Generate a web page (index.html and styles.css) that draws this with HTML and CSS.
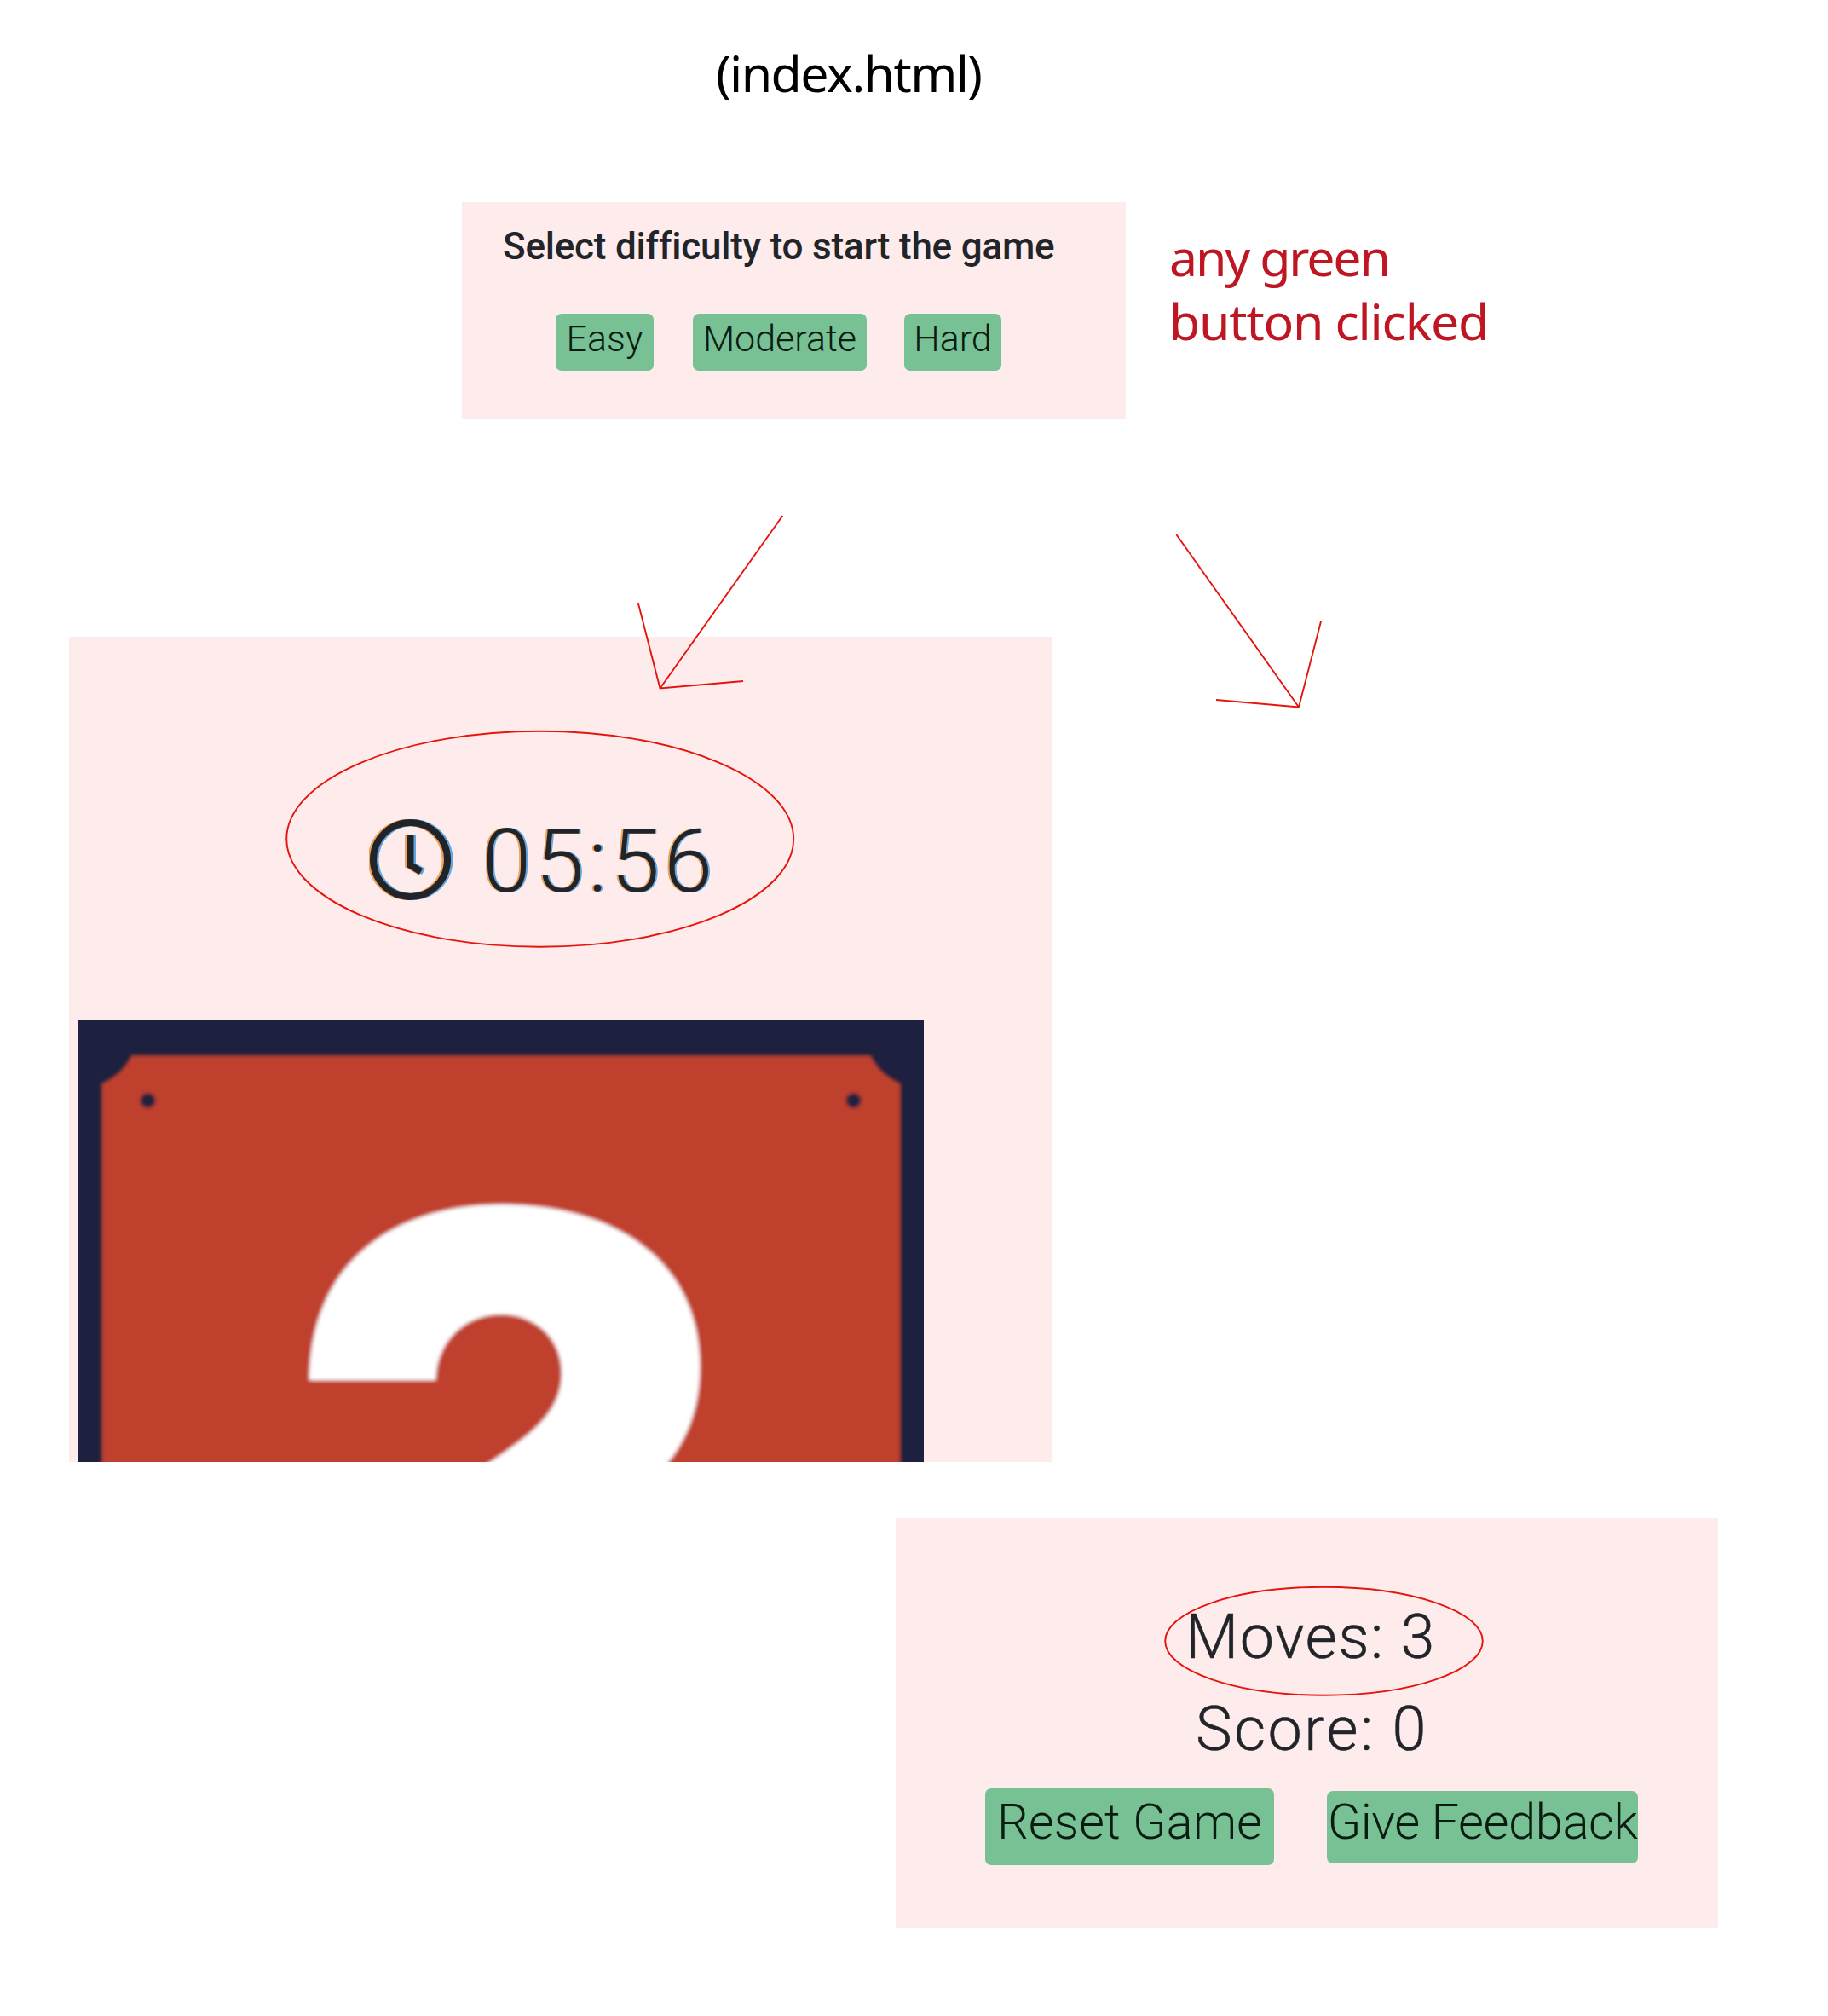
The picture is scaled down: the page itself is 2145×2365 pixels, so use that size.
FILE: index.html
```html
<!DOCTYPE html>
<html lang="en">
<head>
<meta charset="utf-8">
<title>index.html flow</title>
<link rel="stylesheet" href="styles.css">
</head>
<body>
<main class="board">
  <h1 class="board-title">(index.html)</h1>

  <div class="start-row">
    <section class="panel start-panel">
      <h2 class="start-heading">Select difficulty to start the game</h2>
      <div class="difficulty">
        <button class="btn btn-easy">Easy</button>
        <button class="btn btn-moderate">Moderate</button>
        <button class="btn btn-hard">Hard</button>
      </div>
    </section>
    <p class="note"><span class="note-line note-first">any green</span><span class="note-line note-second">button clicked</span></p>
  </div>

  <section class="panel game-panel">
    <div class="timer">
      <svg class="clock" viewBox="0 0 98 98">
        <g fill="none" stroke-width="8">
          <g stroke="#eda45f"><circle cx="46" cy="48.500" r="43.500"/><path d="M46 19V55L59 62.500"/></g>
          <g stroke="#63a5dc"><circle cx="51" cy="48.500" r="43.500"/><path d="M51 19V55L64 62.500"/></g>
          <g stroke="#212529"><circle cx="48.500" cy="48.500" r="43.500"/><path d="M48.500 19V55L61 62.500"/></g>
        </g>
      </svg>
      <span class="time">05:56</span>
    </div>
    <svg class="card" viewBox="91 1196 993 519">
      <defs>
        <filter id="soft" x="-5%" y="-5%" width="110%" height="120%"><feGaussianBlur stdDeviation="2.200"/></filter>
      </defs>
      <rect x="91" y="1196" width="993" height="519" fill="#1d203e"/>
      <g filter="url(#soft)">
        <path d="M119 1760V1271Q144 1260 154 1238H1022Q1032 1260 1057 1271V1760Z" fill="#c0412e"/>
        <circle cx="173.500" cy="1291" r="9" fill="#1d203e"/>
        <circle cx="1001.500" cy="1291" r="9" fill="#1d203e"/>
        <text class="card-mark" transform="translate(328 2121) scale(1.028 1.067)">?</text>
      </g>
    </svg>
  </section>

  <section class="panel stats-panel">
    <p class="stat moves">Moves: 3</p>
    <p class="stat score">Score: 0</p>
    <div class="actions">
      <button class="btn btn-reset">Reset Game</button>
      <button class="btn btn-feedback">Give Feedback</button>
    </div>
  </section>

  <svg class="marks" viewBox="0 0 2145 2365">
    <path d="M918.300 605L774.500 807.500M748.700 707L774.500 807.500L872 799"/>
    <path d="M1380.300 627L1524 829.500M1550 729L1524 829.500L1427 821"/>
    <ellipse cx="633.700" cy="984.200" rx="297.500" ry="126.500"/>
    <ellipse cx="1553.500" cy="1925.200" rx="186.300" ry="63.500"/>
  </svg>
</main>
</body>
</html>
```
FILE: styles.css
```css
* { box-sizing: border-box; }

body {
  margin: 0;
  background: #fff;
  font-family: Roboto, "Liberation Sans", sans-serif;
  color: #212529;
}

.board {
  position: relative;
  width: 2145px;
  height: 2365px;
  overflow: hidden;
}

.board-title {
  margin: 0;
  height: 237px;
  padding: 45px 0 0 840px;
  font: 400 59px/80px "Noto Sans", sans-serif;
  color: #000;
  letter-spacing: -1.6px;
}

.panel { background: #feebeb; }

.start-row {
  display: flex;
  height: 256px;
  padding-left: 542px;
}

.start-panel {
  width: 779px;
  height: 254px;
  padding-top: 27px;
}

.start-heading {
  margin: 0 0 54px 48px;
  font-size: 44px;
  font-weight: 500;
  line-height: 50px;
  letter-spacing: -0.22px;
  white-space: nowrap;
}

.difficulty {
  display: flex;
  padding-left: 110px;
}

.btn {
  padding: 0;
  border: 0;
  border-radius: 7px;
  background: #77c195;
  color: #0b1c13;
  font-family: inherit;
  font-weight: 300;
  text-align: center;
  white-space: nowrap;
}

.difficulty .btn {
  display: block;
  height: 67px;
  padding-bottom: 8px;
  font-size: 43px;
  line-height: 59px;
}

.btn-easy { width: 115px; }
.btn-moderate { width: 204px; margin-left: 46px; }
.btn-hard { width: 114px; margin-left: 44px; }

.note {
  margin: 27px 0 0 51px;
  font: 400 59px/75px "Noto Sans", sans-serif;
  color: #be1622;
  white-space: nowrap;
}

.note-line { display: block; }
.note-first { letter-spacing: -2.2px; }
.note-second { letter-spacing: -1.2px; }

.game-panel {
  width: 1153px;
  height: 968px;
  margin: 254px 0 0 81px;
  padding-top: 204px;
  overflow: hidden;
}

.timer {
  display: flex;
  height: 120px;
  padding-left: 352px;
}

.clock {
  width: 98px;
  height: 98px;
  margin-top: 9px;
}

.time {
  margin-left: 35px;
  font-size: 103px;
  font-weight: 300;
  line-height: 120px;
  letter-spacing: 5px;
  text-shadow: -2px 0 #eda45f, 2px 0 #63a5dc;
}

.card {
  display: block;
  width: 993px;
  height: 519px;
  margin: 125px 0 0 10px;
}

.card-mark {
  font-family: Inter, sans-serif;
  font-size: 900px;
  font-weight: 760;
  fill: #fff;
}

.stats-panel {
  width: 965px;
  height: 481px;
  margin: 66px 0 0 1051px;
  padding-top: 100px;
}

.stat {
  margin: 0;
  font-size: 72px;
  font-weight: 300;
  line-height: 80px;
  -webkit-text-stroke: 0.5px #212529;
}

.moves { padding-left: 340px; letter-spacing: 1.4px; }
.score { padding-left: 352px; margin-top: 28px; letter-spacing: 2.4px; }

.actions {
  display: flex;
  align-items: flex-start;
  padding: 29px 0 0 105px;
}

.actions .btn { font-size: 58px; }

.btn-reset {
  width: 339px;
  height: 90px;
  padding-bottom: 12px;
  line-height: 78px;
}

.btn-feedback {
  width: 365px;
  height: 85px;
  margin: 3px 0 0 62px;
  padding-bottom: 12px;
  line-height: 73px;
  letter-spacing: -0.5px;
}

/* Arrows and rings drawn over the panels */
.marks {
  position: absolute;
  inset: 0;
  width: 2145px;
  height: 2365px;
  fill: none;
  stroke: #e5140c;
  stroke-width: 1.9;
  pointer-events: none;
}
```
